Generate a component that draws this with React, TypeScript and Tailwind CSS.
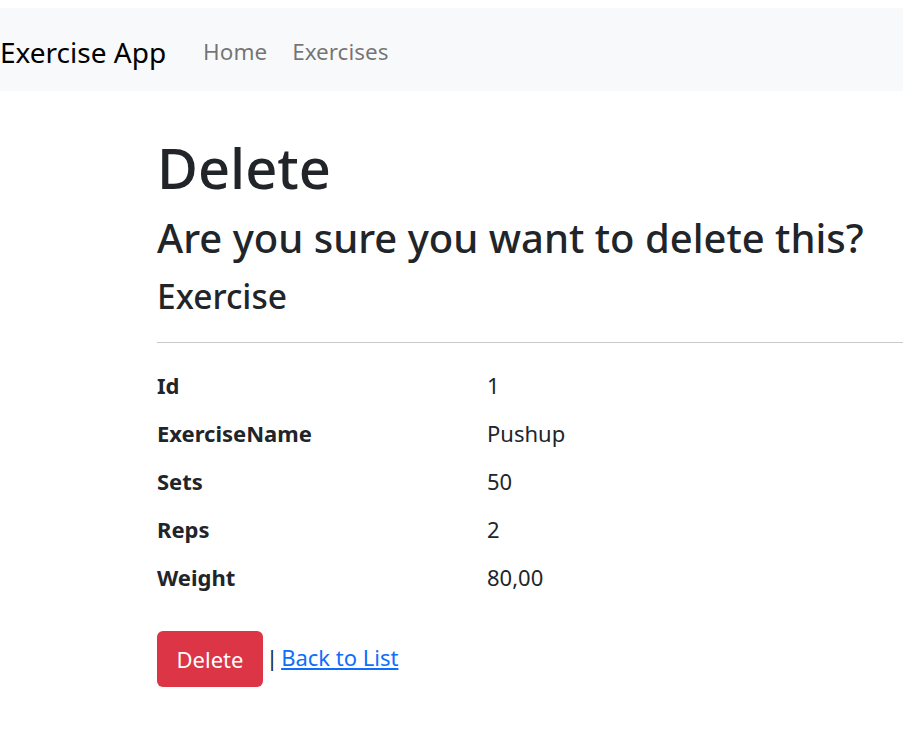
const font = { fontFamily: '"Noto Sans", "Open Sans", sans-serif' };

const rows: [string, string][] = [
  ['Id', '1'],
  ['ExerciseName', 'Pushup'],
  ['Sets', '50'],
  ['Reps', '2'],
  ['Weight', '80,00'],
];

export default function App() {
  return (
    <div className="min-h-[742px] bg-white text-[#212529]" style={font}>
      <div className="pt-2">
        <nav className="flex h-[83px] items-center bg-[#f8f9fa] pt-[4px]">
          <span className="mr-[37px] text-[28px] leading-none text-black">Exercise App</span>
          <a className="mr-[25px] text-[22.5px] text-black/55">Home</a>
          <a className="text-[22.5px] text-black/55">Exercises</a>
        </nav>
      </div>

      <main className="pl-[157px]">
        <h1 className="mt-[43px] text-[56px] font-medium leading-[66px]">Delete</h1>
        <h3 className="mt-[14px] text-[40px] font-medium leading-[48px] whitespace-nowrap">
          Are you sure you want to delete this?
        </h3>
        <div>
          <h4 className="mt-[14px] text-[33.5px] font-medium leading-[40px]">Exercise</h4>
          <hr className="mt-[26px] border-t border-[#c8c9ca]" />
          <dl className="mt-[26px]">
            {rows.map(([k, v]) => (
              <div key={k} className="mb-[15px] flex text-[22px] leading-[33px]">
                <dt className="w-[330px] font-bold">{k}</dt>
                <dd>{v}</dd>
              </div>
            ))}
          </dl>
          <form className="mt-[37px] flex items-center">
            <button
              type="button"
              className="h-[56px] w-[106px] rounded-[6px] bg-[#dc3545] text-[22px] text-white"
            >
              Delete
            </button>
            <div className="-mt-[4px] flex items-center text-[22px]">
              <span className="ml-[3px]">|</span>
              <a className="ml-[3px] text-[#0d6efd] underline">Back to List</a>
            </div>
          </form>
        </div>
      </main>
    </div>
  );
}
